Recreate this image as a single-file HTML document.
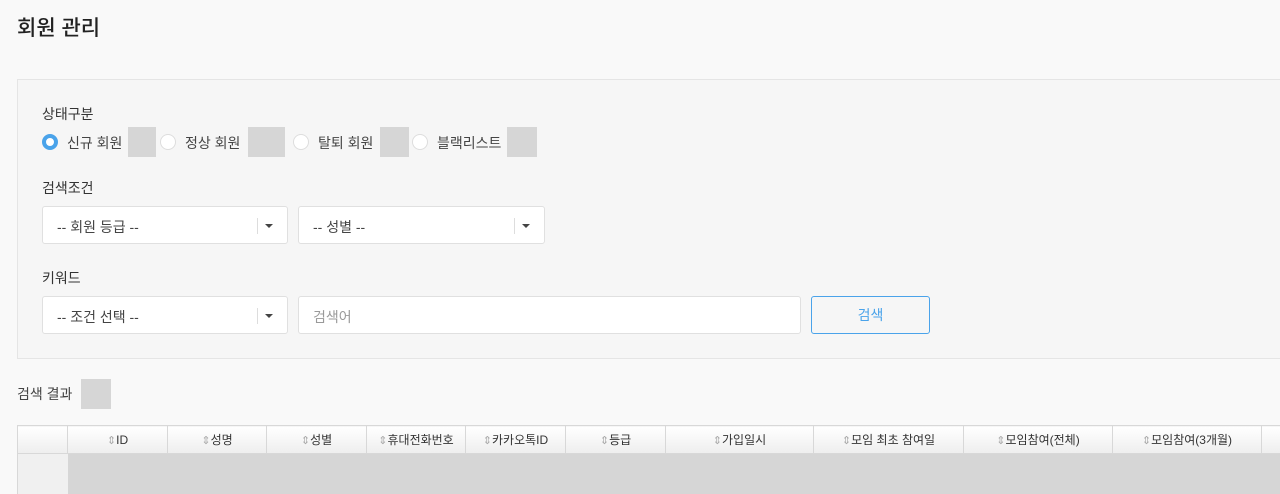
<!DOCTYPE html>
<html><head><meta charset="utf-8"><style>
*{box-sizing:border-box;margin:0;padding:0}
body{width:1280px;height:490px;overflow:hidden;background:#f9f9f9;font-family:"Liberation Sans","Noto Sans CJK KR",sans-serif;color:#333;position:relative}
.a{position:absolute}
.t{font-size:21px;color:#222;left:17px;top:12px;font-weight:500}
.panel{left:17px;top:79px;width:1280px;height:280px;background:#f6f6f6;border:1px solid #e5e5e5}
.lb{font-size:14px;color:#333}
.radio{width:16px;height:16px;border-radius:50%;background:#fff;border:1px solid #ddd}
.radio.on{background:#fff;border:4px solid #4aa3ea}
.rt{font-size:14px;color:#444;top:133px}
.g{background:#d6d6d6}
.sel{background:#fff;border:1px solid #e0e0e0;border-radius:3px;height:38px;font-size:14px;color:#444;padding:10px 14px}
.sel .sep{position:absolute;right:29px;top:11px;width:1px;height:16px;background:#ddd}
.sel .ar{position:absolute;right:14px;top:17px;border-left:4px solid transparent;border-right:4px solid transparent;border-top:4px solid #444}
.wrap{position:absolute;left:17px;top:425px;width:1300px;overflow:hidden}
table{border-collapse:collapse;table-layout:fixed;width:1284px}
th{height:28px;border:1px solid #d8d8d8;background:linear-gradient(#fff,#eee);font-size:12px;font-weight:normal;color:#333}
th span{color:#aaa;font-size:11px}
td{height:40px;background:#d6d6d6;border:none}
td.f{background:#f0f0f0;border-left:1px solid #d8d8d8}
</style></head><body>
<div class="a t">회원 관리</div>
<div class="a panel"></div>
<div class="a lb" style="left:42px;top:104px">상태구분</div>
<div class="a radio on" style="left:42px;top:134px"></div>
<div class="a rt" style="left:67px">신규 회원</div>
<div class="a g" style="left:128px;top:127px;width:28px;height:30px"></div>
<div class="a radio" style="left:160px;top:134px"></div>
<div class="a rt" style="left:185px">정상 회원</div>
<div class="a g" style="left:248px;top:127px;width:37px;height:30px"></div>
<div class="a radio" style="left:293px;top:134px"></div>
<div class="a rt" style="left:318px">탈퇴 회원</div>
<div class="a g" style="left:380px;top:127px;width:29px;height:30px"></div>
<div class="a radio" style="left:412px;top:134px"></div>
<div class="a rt" style="left:437px">블랙리스트</div>
<div class="a g" style="left:507px;top:127px;width:30px;height:30px"></div>
<div class="a lb" style="left:42px;top:178px">검색조건</div>
<div class="a sel" style="left:42px;top:206px;width:246px">-- 회원 등급 --<div class="sep"></div><div class="ar"></div></div>
<div class="a sel" style="left:298px;top:206px;width:247px">-- 성별 --<div class="sep"></div><div class="ar"></div></div>
<div class="a lb" style="left:42px;top:268px">키워드</div>
<div class="a sel" style="left:42px;top:296px;width:246px">-- 조건 선택 --<div class="sep"></div><div class="ar"></div></div>
<div class="a sel" style="left:298px;top:296px;width:503px;color:#999">검색어</div>
<div class="a" style="left:811px;top:296px;width:119px;height:38px;border:1px solid #4aa3ea;border-radius:3px;font-size:14px;color:#4aa3ea;text-align:center;line-height:36px">검색</div>
<div class="a" style="left:17px;top:384px;font-size:14px;color:#444">검색 결과</div>
<div class="a g" style="left:81px;top:379px;width:30px;height:30px"></div>
<div class="wrap"><table>
<colgroup><col style="width:50px"><col style="width:100px"><col style="width:99px"><col style="width:100px"><col style="width:99px"><col style="width:100px"><col style="width:100px"><col style="width:148px"><col style="width:150px"><col style="width:149px"><col style="width:149px"><col style="width:40px"></colgroup>
<tr><th></th><th><span>⇕</span>ID</th><th><span>⇕</span>성명</th><th><span>⇕</span>성별</th><th><span>⇕</span>휴대전화번호</th><th><span>⇕</span>카카오톡ID</th><th><span>⇕</span>등급</th><th><span>⇕</span>가입일시</th><th><span>⇕</span>모임 최초 참여일</th><th><span>⇕</span>모임참여(전체)</th><th><span>⇕</span>모임참여(3개월)</th><th></th></tr>
<tr><td class="f"></td><td></td><td></td><td></td><td></td><td></td><td></td><td></td><td></td><td></td><td></td><td></td></tr>
</table></div>
</body></html>
